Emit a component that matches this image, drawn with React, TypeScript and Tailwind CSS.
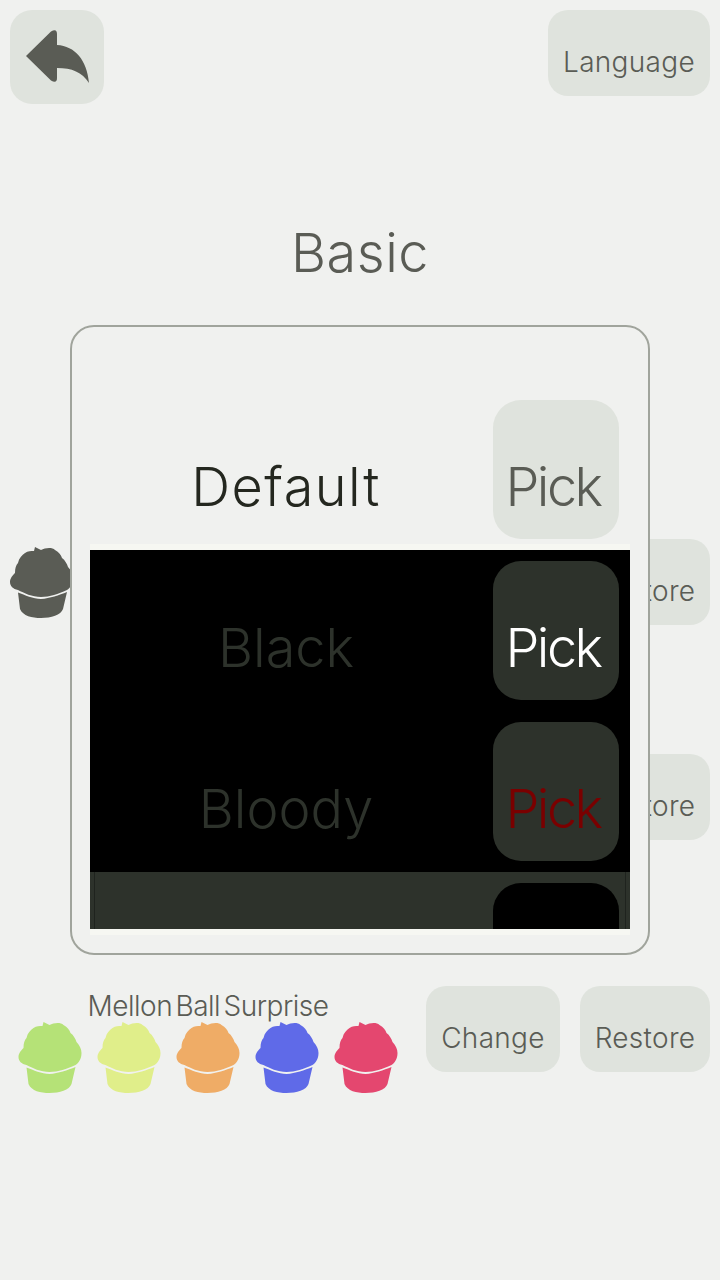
import React from "react";

const font = { fontFamily: '"Inter", "Open Sans", sans-serif' };

function Cupcake({ color, className }: { color: string; className: string }) {
  return (
    <svg viewBox="0 0 63 71" className={className} fill={color}>
      <path d="M8 43C3 42 0 39 0 35C0 31 3 28 5 26C5 21 6 18 8 16C9 11 12 8 15 6C18 4 21 4 24 4L25 0L31 3C35 1 42 0 45 3C49 5 51 8 52 11C55 13 57 17 58 20C61 23 63 27 63 31C63 37 60 41 57 43C48 47 40 50 31 50C22 50 14 46 8 43Z" />
      <path d="M8 45.500C15 48 23 52 31 52C40 51.500 49 48 57 45L53 62C51 68 41 71 31 71C22 71 13 69 10 62Z" />
    </svg>
  );
}

function Btn({ label, className }: { label: string; className: string }) {
  return (
    <div className={`flex justify-center rounded-[20px] bg-[#dfe3dd] pt-[35px] text-[28px] leading-[34px] font-light tracking-[0.3px] text-[#5a5c55] ${className}`}>
      {label}
    </div>
  );
}

function Row({
  label,
  labelColor,
  pick,
  rowBg,
  btnBg,
  pickColor,
  labelTrack = "",
  children,
}: {
  label: string;
  labelColor: string;
  pick: string;
  rowBg: string;
  btnBg: string;
  pickColor: string;
  labelTrack?: string;
  children?: React.ReactNode;
}) {
  return (
    <div className={`relative flex h-[161px] shrink-0 pt-[11px] pr-[11px] ${rowBg}`}>
      {children}
      <div className={`flex flex-1 justify-center pt-[56px] pr-[11px] text-[54px] leading-[62px] font-light ${labelTrack} ${labelColor}`}>{label}</div>
      <div className={`flex h-[139px] w-[126px] justify-center rounded-[28px] pt-[56px] pr-[6px] text-[54px] leading-[62px] font-light tracking-[-2.5px] ${btnBg} ${pickColor}`}>{pick}</div>
    </div>
  );
}

export default function App() {
  return (
    <div className="relative h-[1280px] w-[720px] overflow-hidden bg-[#f0f1ef]" style={font}>
      <header className="flex items-start justify-between px-[10px] pt-[10px]">
        <div className="h-[94px] w-[94px] rounded-[22px] bg-[#dfe3dd]">
          <svg viewBox="10 10 94 94" className="h-[94px] w-[94px]" fill="#5a5c55">
            <path d="M26 56L51 31.500Q57 28 57 34L57 45C75 46 87 60 89 83C82 72 72 68 57 68L57 78Q57 84 51 80.500Z" />
          </svg>
        </div>
        <Btn label="Language" className="h-[86px] w-[162px]" />
      </header>

      <h1 className="mt-[117px] text-center text-[54px] leading-[64px] font-light tracking-[0.5px] text-[#5a5c55]">Basic</h1>

      <main className="relative mt-[40px] h-[630px]">
        <Cupcake color="#5a5c55" className="absolute top-[222px] left-[10px] h-[71px] w-[63px]" />
        <Btn label="Restore" className="absolute top-[214px] left-[580px] h-[86px] w-[130px]" />
        <Btn label="Restore" className="absolute top-[429px] left-[580px] h-[86px] w-[130px]" />

        <div className="relative ml-[70px] h-[630px] w-[580px] rounded-[24px] border-2 border-[#a0a49c] bg-[#f0f1ef] px-[18px] pt-[62px]">
          <div className="flex h-[546px] flex-col overflow-hidden border-b-[6px] border-[#f6f7f2]">
            <Row label="Default" labelTrack="tracking-[1.5px]" labelColor="text-[#24271f]" pick="Pick" rowBg="border-b-[6px] border-[#f6f7f2]" btnBg="bg-[#dfe3dd]" pickColor="text-[#5a5c55]" />
            <Row label="Black" labelColor="text-[#2d322b]" pick="Pick" rowBg="bg-black" btnBg="bg-[#2d322b]" pickColor="text-white" />
            <Row label="Bloody" labelColor="text-[#2d322b]" pick="Pick" rowBg="bg-black" btnBg="bg-[#2d322b]" pickColor="text-[#7a0000]" />
            <Row label="" labelColor="text-black" pick="" rowBg="bg-[#2d322b]" btnBg="bg-black" pickColor="text-black">
              <span className="absolute top-0 bottom-0 left-[4px] w-[1px] bg-[#1f231e]" />
              <span className="absolute top-0 right-[4px] bottom-0 w-[1px] bg-[#1f231e]" />
            </Row>
          </div>
        </div>
      </main>

      <section className="mt-[31px] flex items-start pr-[10px] pl-[18px]">
        <div className="w-[380px]">
          <div className="pt-[3px] text-center text-[28px] leading-[34px] font-light tracking-[-0.5px] [word-spacing:-4px] text-[#5a5c55]">Mellon Ball Surprise</div>
          <div className="-mt-[1px] flex gap-[15px]">
            <Cupcake color="#b5e277" className="h-[71px] w-[64px]" />
            <Cupcake color="#e0ee8a" className="h-[71px] w-[64px]" />
            <Cupcake color="#efac66" className="h-[71px] w-[64px]" />
            <Cupcake color="#5f6ae8" className="h-[71px] w-[64px]" />
            <Cupcake color="#e4476f" className="h-[71px] w-[64px]" />
          </div>
        </div>
        <Btn label="Change" className="ml-[28px] h-[86px] w-[134px]" />
        <Btn label="Restore" className="ml-[20px] h-[86px] w-[130px]" />
      </section>
    </div>
  );
}
